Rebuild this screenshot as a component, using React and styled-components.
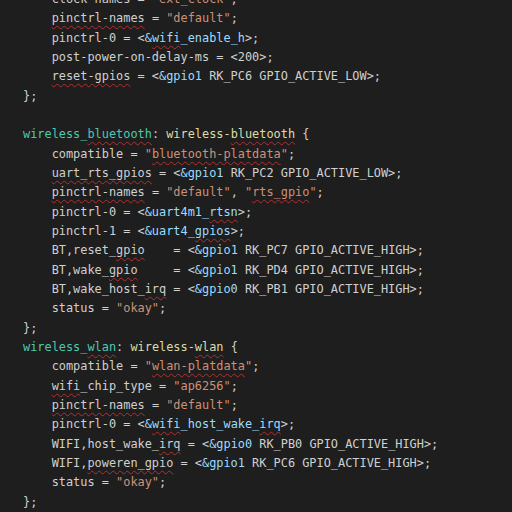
import React from "react";
import styled, { createGlobalStyle } from "styled-components";

const Global = createGlobalStyle`
  html, body { margin: 0; padding: 0; background: #1e1e1e; }
  body { width: 512px; height: 512px; overflow: hidden; }
`;

const Editor = styled.div`
  width: 512px;
  height: 512px;
  overflow: hidden;
  background: #1e1e1e;
`;

const Code = styled.div`
  margin-top: -10px;
  padding-left: 23px;
  font-family: "DejaVu Sans Mono", "Liberation Mono", monospace;
  font-size: 11.9px;
  color: #d0d0d0;
`;

const Line = styled.div`
  height: 19.33px;
  line-height: 19.33px;
  white-space: pre;
`;

const colors = {
  p: "#d0d0d0",
  s: "#ce9178",
  l: "#4ec9b0",
  n: "#dcdcaa",
  r: "#9cdcfe",
};

const Tok = styled.span`
  color: ${(p) => colors[p.$k]};
  ${(p) =>
    p.$u
      ? `text-decoration: underline wavy rgba(200, 50, 50, 0.85);
         text-decoration-thickness: 1px;
         text-underline-offset: 3px;`
      : ""}
`;

// token helpers: [text, kind, underline]
const P = (t) => [t, "p"];
const S = (t, u) => [t, "s", u];
const L = (t, u) => [t, "l", u];
const N = (t, u) => [t, "n", u];
const R = (t, u) => [t, "r", u];
const U = (t) => [t, "p", true];

const I = "    ";

const lines = [
  [P(I + "clock-names = "), S('"ext_clock"'), P(";")],
  [P(I), U("pinctrl-names"), P(" = "), S('"default"'), P(";")],
  [P(I + "pinctrl-0 = <"), R("&"), R("wifi", true), R("_enable_h"), P(">;")],
  [P(I + "post-power-on-delay-ms = <200>;")],
  [P(I), U("reset-gpios"), P(" = <"), R("&gpio1"), P(" RK_PC6 GPIO_ACTIVE_LOW>;")],
  [P("};")],
  [P("")],
  [L("wireless_"), L("bluetooth", true), P(": "), N("wireless-"), N("bluetooth", true), P(" {")],
  [P(I + "compatible = "), S('"'), S("bluetooth-platdata", true), S('"'), P(";")],
  [P(I), U("uart_rts_gpios"), P(" = <"), R("&gpio1"), P(" RK_PC2 GPIO_ACTIVE_LOW>;")],
  [P(I), U("pinctrl-names"), P(" = "), S('"default"'), P(", "), S('"'), S("rts_gpio", true), S('"'), P(";")],
  [P(I + "pinctrl-0 = <"), R("&uart4m1_"), R("rtsn", true), P(">;")],
  [P(I + "pinctrl-1 = <"), R("&uart4_"), R("gpios", true), P(">;")],
  [P(I + "BT,reset_"), U("gpio"), P("    = <"), R("&gpio1"), P(" RK_PC7 GPIO_ACTIVE_HIGH>;")],
  [P(I + "BT,wake_"), U("gpio"), P("     = <"), R("&gpio1"), P(" RK_PD4 GPIO_ACTIVE_HIGH>;")],
  [P(I + "BT,wake_host_"), U("irq"), P(" = <"), R("&gpio0"), P(" RK_PB1 GPIO_ACTIVE_HIGH>;")],
  [P(I + "status = "), S('"okay"'), P(";")],
  [P("};")],
  [L("wireless_"), L("wlan", true), P(": "), N("wireless-"), N("wlan", true), P(" {")],
  [P(I + "compatible = "), S('"'), S("wlan-platdata", true), S('"'), P(";")],
  [P(I), U("wifi"), P("_chip_type = "), S('"ap6256"'), P(";")],
  [P(I), U("pinctrl-names"), P(" = "), S('"default"'), P(";")],
  [P(I + "pinctrl-0 = <"), R("&"), R("wifi", true), R("_host_wake_"), R("irq", true), P(">;")],
  [P(I + "WIFI,host_wake_"), U("irq"), P(" = <"), R("&gpio0"), P(" RK_PB0 GPIO_ACTIVE_HIGH>;")],
  [P(I + "WIFI,"), U("poweren_gpio"), P(" = <"), R("&gpio1"), P(" RK_PC6 GPIO_ACTIVE_HIGH>;")],
  [P(I + "status = "), S('"okay"'), P(";")],
  [P("};")],
];

export default function App() {
  return (
    <Editor>
      <Global />
      <Code>
        {lines.map((toks, i) => (
          <Line key={i}>
            {toks.map(([t, k, u], j) => (
              <Tok key={j} $k={k} $u={u}>
                {t}
              </Tok>
            ))}
            {toks.length === 1 && toks[0][0] === "" ? " " : null}
          </Line>
        ))}
      </Code>
    </Editor>
  );
}
